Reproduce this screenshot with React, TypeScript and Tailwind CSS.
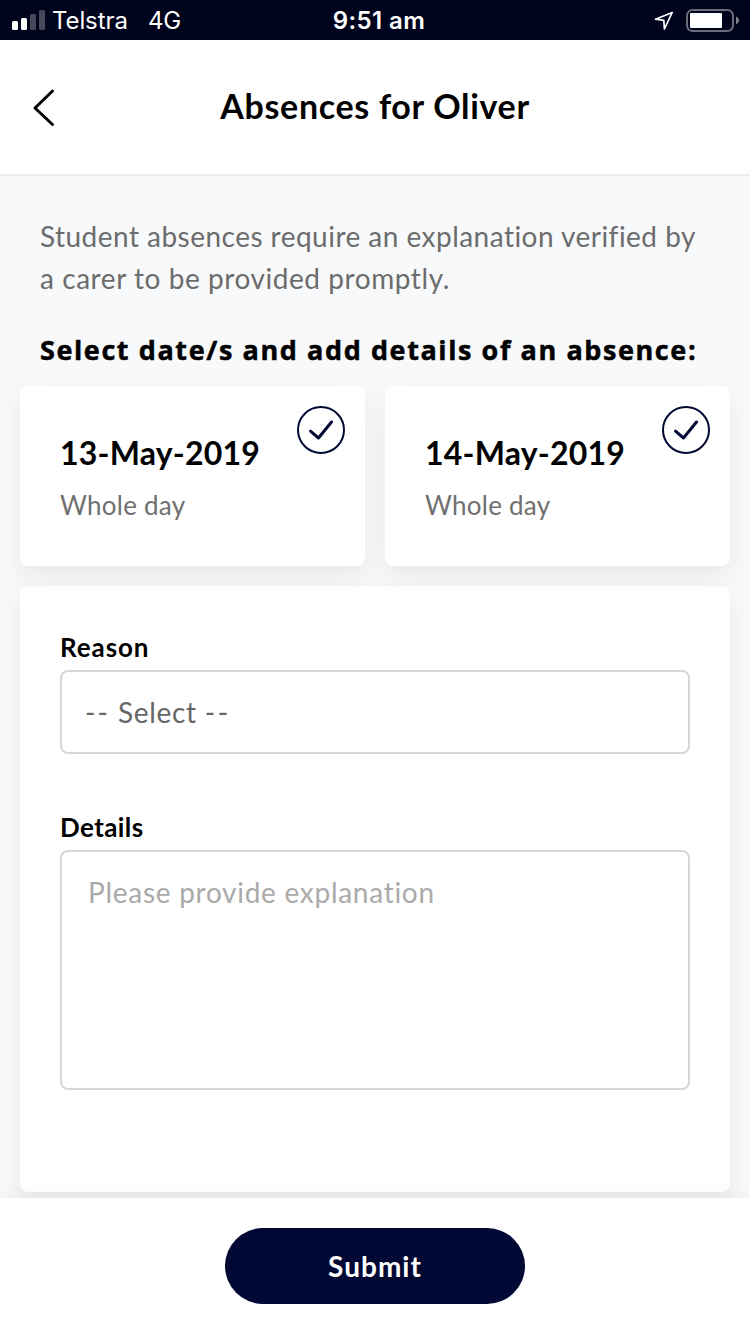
import React from "react";

function StatusBar() {
  return (
    <div className="flex h-10 shrink-0 items-center bg-[#00031c] font-['Inter','Liberation_Sans',sans-serif] text-white">
      <div className="flex w-[250px] items-center">
        <svg width="34" height="20" viewBox="0 0 34 20" className="ml-3 shrink-0" fill="#fff">
          <rect x="0" y="11" width="6" height="9" rx="1.5" />
          <rect x="9" y="8" width="6" height="12" rx="1.5" />
          <rect x="18" y="4" width="6" height="16" rx="1.5" opacity="0.28" />
          <rect x="27" y="0" width="6" height="20" rx="1.5" opacity="0.28" />
        </svg>
        <span className="ml-[6px] w-[96px] pt-0.5 text-[24px] leading-10 tracking-[-0.1px]">Telstra</span>
        <span className="pt-0.5 text-[24px] leading-10 tracking-[-0.3px]">4G</span>
      </div>
      <div className="flex-1 pl-[8px] pt-0.5 text-center text-[24px] font-semibold leading-10 tracking-[0.4px]">9:51 am</div>
      <div className="flex w-[250px] items-center justify-end pt-0.5">
        <svg width="20" height="20" viewBox="0 0 20 20" fill="none" stroke="#fff" strokeWidth="1.7" strokeLinejoin="round">
          <path d="M18.2 1.5 1.5 8.2 9.8 9.3 10.4 18Z" />
        </svg>
        <svg width="54" height="24" viewBox="0 0 54 24" className="ml-3 mr-[10px]">
          <rect x="1" y="1" width="46" height="21" rx="5.5" fill="none" stroke="#fff" strokeOpacity="0.42" strokeWidth="2" />
          <rect x="4" y="4" width="32" height="15" rx="1" fill="#fff" />
          <path d="M50 7.600c4 1.700 4 5.800 0 7.800z" fill="#fff" fillOpacity="0.5" />
        </svg>
      </div>
    </div>
  );
}

function DateCard({ date }: { date: string }) {
  return (
    <div className="relative h-[180px] flex-1 rounded-lg bg-white pl-10 pt-[47px] shadow-[0_10px_24px_rgba(0,0,0,0.07)]">
      <div className="text-[32px] font-bold leading-10 tracking-[0.22px] text-black">{date}</div>
      <div className="mt-[14px] text-[26px] leading-9 tracking-[0.25px] text-[#707070]">Whole day</div>
      <svg width="48" height="48" viewBox="0 0 48 48" fill="none" stroke="#000833" className="absolute right-5 top-5">
        <circle cx="24" cy="24" r="23" strokeWidth="2" />
        <path d="M13.500 25.200 21.500 32 34.500 16" strokeWidth="3" strokeLinecap="round" strokeLinejoin="round" />
      </svg>
    </div>
  );
}

export default function App() {
  return (
    <div className="flex h-[1334px] w-[750px] flex-col overflow-hidden bg-[#f8f9fb] font-['Lato','Open_Sans',sans-serif]">
      <StatusBar />
      <header className="flex h-[136px] shrink-0 items-center border-b-2 border-[#ececec] bg-white">
        <button className="ml-8 w-[60px]" aria-label="Back">
          <svg width="24" height="40" viewBox="0 0 24 40" fill="none" stroke="#000" strokeWidth="3" strokeLinecap="round" strokeLinejoin="round">
            <path d="M20.500 4 3 21l17.500 16.500" />
          </svg>
        </button>
        <h1 className="mr-[92px] flex-1 pb-0.5 text-center text-[34px] font-bold leading-10 tracking-[0.68px] text-black">Absences for Oliver</h1>
      </header>
      <main className="flex flex-1 flex-col px-5">
        <p className="whitespace-nowrap px-5 pt-[39px] text-[28px] leading-[42px] tracking-[0.56px] text-[#6c6c6c]">
          <span className="tracking-[0.47px]">Student absences require an explanation verified by</span>
          <br />a carer to be provided promptly.
        </p>
        <h2 className="mt-[31px] whitespace-nowrap px-5 font-['Open_Sans',sans-serif] text-[27px] font-bold leading-10 tracking-[1.59px] text-black [-webkit-text-stroke:0.5px_#000]">
          Select date/s and add details of an absence:
        </h2>
        <div className="mt-4 flex gap-5">
          <DateCard date="13-May-2019" />
          <DateCard date="14-May-2019" />
        </div>
        <section className="mt-5 h-[606px] rounded-lg bg-white px-10 pt-[43px] shadow-[0_10px_24px_rgba(0,0,0,0.07)]">
          <div className="text-[26px] font-bold leading-9 tracking-[0.9px] text-black">Reason</div>
          <div className="mt-[5px] flex h-[84px] items-center whitespace-pre rounded-lg border-2 border-[#d6d6d6] px-[23px] text-[28px] tracking-[0.7px] text-[#666]">
            <span className="tracking-[2.1px]">--</span> Select <span className="tracking-[2.8px]">--</span>
          </div>
          <div className="mt-[55px] text-[26px] font-bold leading-9 tracking-[0.4px] text-black">Details</div>
          <div className="mt-[5px] h-[240px] rounded-lg border-2 border-[#d6d6d6] px-[26px] pt-5 text-[28px] leading-10 tracking-[0.72px] text-[#aaa]">
            Please provide explanation
          </div>
        </section>
      </main>
      <footer className="relative flex h-[136px] shrink-0 justify-center bg-white pt-[30px] shadow-[0_0_20px_rgba(0,0,0,0.06)]">
        <button className="h-[76px] w-[300px] rounded-full bg-[#000833] text-[28px] font-bold tracking-[1px] text-white">Submit</button>
      </footer>
    </div>
  );
}
